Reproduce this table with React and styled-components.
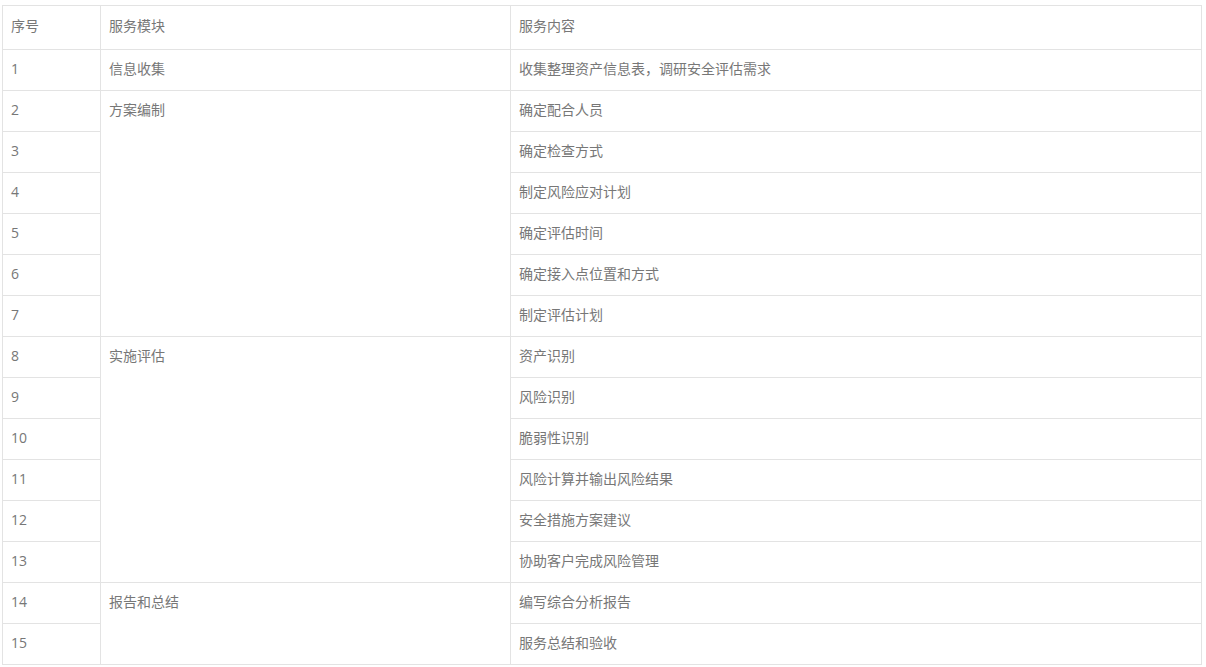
import styled, { createGlobalStyle } from "styled-components";

const GlobalStyle = createGlobalStyle`
  body {
    margin: 0;
    background: #fff;
    font-family: "Open Sans", "Noto Sans CJK SC", sans-serif;
  }
`;

const Wrap = styled.div`
  padding: 5px 4px 0 2px;
`;

const Table = styled.table`
  width: 1200px;
  border-collapse: collapse;
  table-layout: fixed;
  font-size: 14px;
  color: #777;
`;

const Th = styled.th`
  height: 40px;
  padding: 0 8px 3px;
  border: 1px solid #e3e3e3;
  text-align: left;
  font-weight: normal;
  line-height: 20px;
`;

const Td = styled.td`
  height: 38px;
  padding: 0 8px 2px;
  border: 1px solid #e3e3e3;
  line-height: 20px;
  vertical-align: ${(p) => (p.rowSpan > 1 ? "top" : "middle")};
  padding-top: ${(p) => (p.rowSpan > 1 ? "9px" : "0")};
`;

const groups = [
  { name: "信息收集", items: ["收集整理资产信息表，调研安全评估需求"] },
  {
    name: "方案编制",
    items: [
      "确定配合人员",
      "确定检查方式",
      "制定风险应对计划",
      "确定评估时间",
      "确定接入点位置和方式",
      "制定评估计划",
    ],
  },
  {
    name: "实施评估",
    items: [
      "资产识别",
      "风险识别",
      "脆弱性识别",
      "风险计算并输出风险结果",
      "安全措施方案建议",
      "协助客户完成风险管理",
    ],
  },
  { name: "报告和总结", items: ["编写综合分析报告", "服务总结和验收"] },
];

const App = () => {
  let n = 0;
  return (
    <Wrap>
      <GlobalStyle />
      <Table>
        <colgroup>
          <col style={{ width: 98 }} />
          <col style={{ width: 410 }} />
          <col />
        </colgroup>
        <thead>
          <tr>
            <Th>序号</Th>
            <Th>服务模块</Th>
            <Th>服务内容</Th>
          </tr>
        </thead>
        <tbody>
          {groups.map((g) =>
            g.items.map((item, i) => {
              n += 1;
              return (
                <tr key={n}>
                  <Td>{n}</Td>
                  {i === 0 && <Td rowSpan={g.items.length}>{g.name}</Td>}
                  <Td>{item}</Td>
                </tr>
              );
            })
          )}
        </tbody>
      </Table>
    </Wrap>
  );
};

export default App;
